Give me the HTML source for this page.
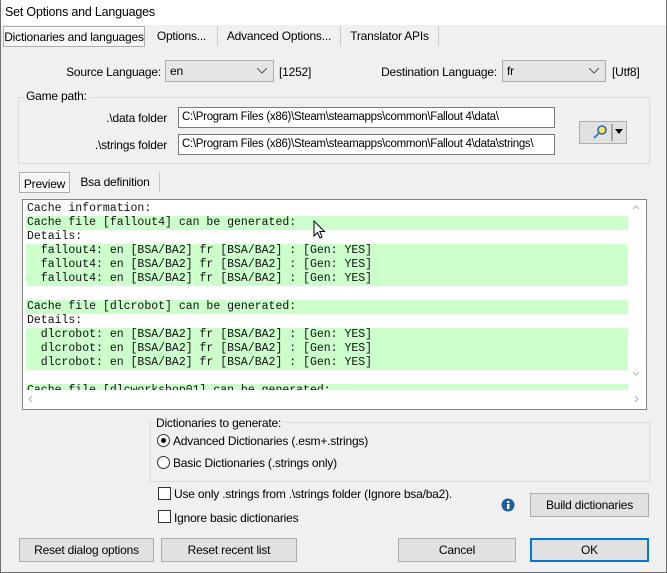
<!DOCTYPE html>
<html><head><meta charset="utf-8"><style>
*{box-sizing:border-box;margin:0;padding:0}
body{width:667px;height:573px;overflow:hidden;background:#f0f0f0;font-family:"Liberation Sans",sans-serif;font-size:12px;letter-spacing:-0.2px;color:#000;position:relative;white-space:nowrap}
.a{position:absolute}
.win{left:0;top:0;width:667px;height:573px;border:1px solid #6e6e6e;border-top:none}
.title{left:1px;top:0;width:665px;height:25px;background:#fff}
.tab{position:absolute;top:26px;height:20px;border-right:1px solid #c9c9c9;padding:3px 0 0 0;text-align:center}
.sel{background:#f6f6f6;border:1px solid #adadad;box-shadow:inset 1px 1px 0 #fff}
.combo{position:absolute;height:22px;background:#e5e5e5;border:1px solid #adadad;padding:3px 0 0 4px}
.combo svg{position:absolute;right:6px;top:7px}
.edit{position:absolute;height:21px;background:#fff;border:1px solid #7a7a7a;padding:3px 0 0 3px;overflow:hidden;font-size:11.5px;letter-spacing:-0.3px}
.grp{position:absolute;border:1px solid #dcdcdc}
.btn{position:absolute;height:24px;background:#e1e1e1;border:1px solid #adadad;text-align:center;padding-top:4px}
.txt{left:22px;top:199px;width:625px;height:211px;background:#fff;border:1px solid #828282;overflow:hidden}
.mono{position:absolute;left:3px;top:2px;width:602px;font-family:"Liberation Mono",monospace;font-size:11.5px;line-height:14px;letter-spacing:0;color:#111}
.mono div{height:14px;padding-left:1px;white-space:pre}
.g{background:#ccffcc}
.cb{position:absolute;width:13px;height:13px;border:1px solid #333;background:#fff}
.rd{position:absolute;width:13px;height:13px;border:1px solid #333;border-radius:50%;background:#fff}
.r{position:absolute;text-align:right}
</style></head><body>
<div class="a win"></div>
<div class="a title"></div>
<div class="a" style="left:5px;top:5px;font-size:12.5px">Set Options and Languages</div>
<div class="tab sel" style="left:3px;top:26px;width:142px;height:21px">Dictionaries and languages</div>
<div class="tab" style="left:146px;width:72px">Options...</div>
<div class="tab" style="left:218px;width:123px">Advanced Options...</div>
<div class="tab" style="left:341px;width:98px">Translator APIs</div>

<div class="r" style="left:40px;width:121px;top:65px">Source Language:</div>
<div class="combo" style="left:165px;top:60px;width:109px">en<svg width="10" height="6"><path d="M0 0L5 5L10 0" fill="none" stroke="#555"/></svg></div>
<div class="a" style="left:279px;top:65px">[1252]</div>
<div class="r" style="left:360px;width:137px;top:65px">Destination Language:</div>
<div class="combo" style="left:502px;top:60px;width:104px">fr<svg width="10" height="6"><path d="M0 0L5 5L10 0" fill="none" stroke="#555"/></svg></div>
<div class="a" style="left:612px;top:65px">[Utf8]</div>

<div class="grp" style="left:18px;top:97px;width:632px;height:67px"></div>
<div class="a" style="left:24px;top:89px;background:#f0f0f0;padding:0 2px">Game path:</div>
<div class="r" style="left:60px;width:107px;top:111px">.\data folder</div>
<div class="edit" style="left:178px;top:107px;width:377px">C:\Program Files (x86)\Steam\steamapps\common\Fallout 4\data\</div>
<div class="r" style="left:60px;width:107px;top:138px">.\strings folder</div>
<div class="edit" style="left:178px;top:134px;width:377px">C:\Program Files (x86)\Steam\steamapps\common\Fallout 4\data\strings\</div>
<div class="a" style="left:579px;top:121px;width:48px;height:23px;background:#e1e1e1;border:1px solid #adadad">
<svg width="46" height="21" style="position:absolute;left:0;top:0"><circle cx="22" cy="8" r="4" fill="#ffe35a" stroke="#2a6fb0" stroke-width="1.6"/><path d="M19 11L14 16" stroke="#2a6fb0" stroke-width="1.6"/><path d="M32 2V19" stroke="#666"/><path d="M35 7H43L39 12Z" fill="#000"/></svg></div>

<div class="tab sel" style="left:19px;top:172px;width:51px;height:21px;padding-top:4px">Preview</div>
<div class="tab" style="left:71px;top:172px;width:89px;padding-top:3px">Bsa definition</div>

<div class="a txt">
<div class="mono"><div>Cache information:</div><div class="g">Cache file [fallout4] can be generated:</div><div>Details:</div><div class="g">  fallout4: en [BSA/BA2] fr [BSA/BA2] : [Gen: YES]</div><div class="g">  fallout4: en [BSA/BA2] fr [BSA/BA2] : [Gen: YES]</div><div class="g">  fallout4: en [BSA/BA2] fr [BSA/BA2] : [Gen: YES]</div><div> </div><div class="g">Cache file [dlcrobot] can be generated:</div><div>Details:</div><div class="g">  dlcrobot: en [BSA/BA2] fr [BSA/BA2] : [Gen: YES]</div><div class="g">  dlcrobot: en [BSA/BA2] fr [BSA/BA2] : [Gen: YES]</div><div class="g">  dlcrobot: en [BSA/BA2] fr [BSA/BA2] : [Gen: YES]</div><div> </div><div class="g">Cache file [dlcworkshop01] can be generated:</div></div>
<div class="a" style="left:0;top:190px;width:623px;height:19px;background:#fff"></div>
<svg class="a" style="left:603px;top:0" width="20" height="190"><path d="M7 9L10 6L13 9M7 172L10 175L13 172" fill="none" stroke="#bbb" stroke-width="1.2"/></svg>
<svg class="a" style="left:0;top:190px" width="623" height="19"><path d="M9 6L6 9L9 12M612 6L615 9L612 12" fill="none" stroke="#bbb" stroke-width="1.2"/></svg>
</div>
<svg class="a" style="left:313px;top:220px" width="14" height="20"><path d="M1 1V16L4.5 12.5L7 18L9 17L6.8 11.5H11.5Z" fill="#fff" stroke="#000" stroke-width="1"/></svg>

<div class="grp" style="left:150px;top:422px;width:500px;height:60px"></div>
<div class="a" style="left:154px;top:416px;background:#f0f0f0;padding:0 2px">Dictionaries to generate:</div>
<div class="rd" style="left:157px;top:434px"><div style="position:absolute;left:3px;top:3px;width:5px;height:5px;border-radius:50%;background:#000"></div></div>
<div class="a" style="left:173px;top:434px">Advanced Dictionaries (.esm+.strings)</div>
<div class="rd" style="left:157px;top:456px"></div>
<div class="a" style="left:173px;top:456px">Basic Dictionaries (.strings only)</div>

<div class="cb" style="left:158px;top:487px"></div>
<div class="a" style="left:174px;top:487px">Use only .strings from .\strings folder (Ignore bsa/ba2).</div>
<div class="cb" style="left:158px;top:510px"></div>
<div class="a" style="left:174px;top:511px">Ignore basic dictionaries</div>
<svg class="a" style="left:501px;top:498px" width="14" height="14"><circle cx="7" cy="7" r="6.5" fill="#1e5f9a"/><rect x="6" y="6" width="2.4" height="5" fill="#fff"/><rect x="6" y="3" width="2.4" height="2" fill="#fff"/></svg>
<div class="btn" style="left:530px;top:493px;width:119px">Build dictionaries</div>

<div class="btn" style="left:19px;top:538px;width:135px">Reset dialog options</div>
<div class="btn" style="left:161px;top:538px;width:136px">Reset recent list</div>
<div class="btn" style="left:398px;top:538px;width:118px">Cancel</div>
<div class="btn" style="left:530px;top:538px;width:119px;border:2px solid #0078d7;padding-top:3px">OK</div>
</body></html>
